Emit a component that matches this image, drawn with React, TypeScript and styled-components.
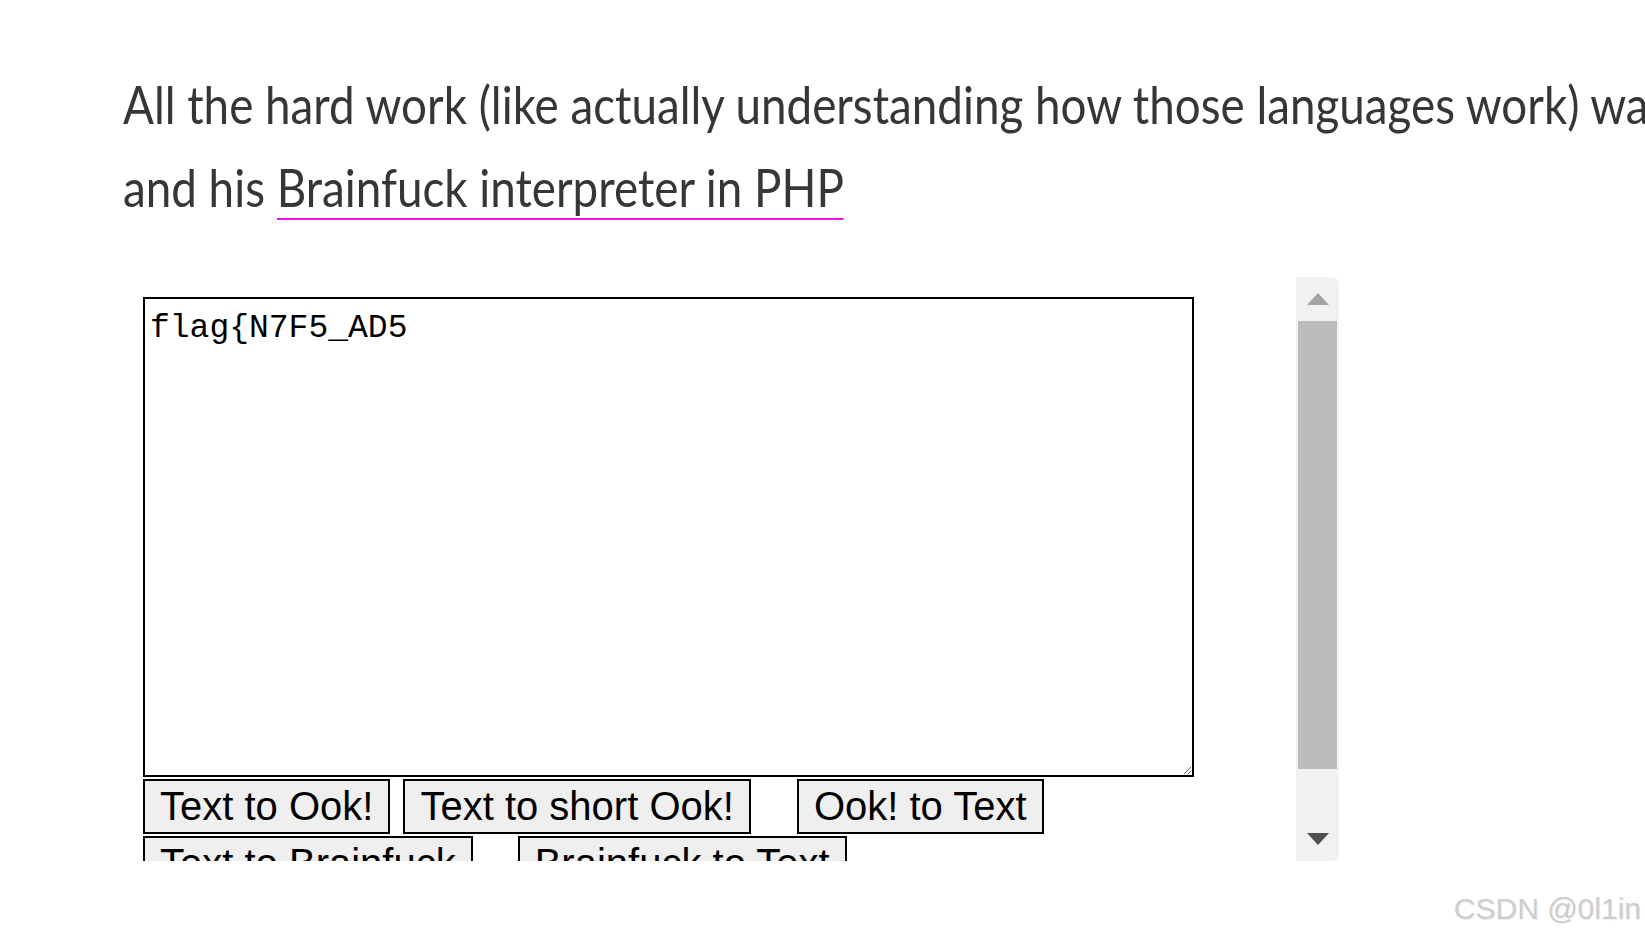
import styled, { createGlobalStyle } from "styled-components";

const GlobalStyle = createGlobalStyle`
  html, body {
    margin: 0;
    padding: 0;
    background: #ffffff;
    overflow: hidden;
  }
  * {
    box-sizing: border-box;
  }
`;

const S = {
  Page: styled.div`
    width: 1645px;
    height: 938px;
    display: flex;
    flex-direction: column;
    overflow: hidden;
  `,
  Main: styled.div`
    padding-left: 123px;
    display: flex;
    flex-direction: column;
  `,
  Paragraph: styled.p`
    margin: 63px 0 0;
    font-family: Lato, "Liberation Sans", sans-serif;
    font-size: 52px;
    line-height: 83px;
    color: #363636;
    white-space: nowrap;
    /* the original face is a narrow one, Lato is squeezed to its width */
    transform: scaleX(0.88);
    transform-origin: left center;
  `,
  Link: styled.a`
    color: inherit;
    text-decoration: none;
    border-bottom: 2px solid #f012e8;
  `,
  Frame: styled.div`
    margin-top: 48px;
    height: 584px;
    width: 1216px;
    display: flex;
  `,
  Content: styled.div`
    flex: 1;
    overflow: hidden;
    padding: 20px 0 0 20px;
  `,
  TextArea: styled.textarea`
    display: block;
    width: 1051px;
    height: 480px;
    margin: 0 0 2px;
    padding: 11px 5px 5px;
    border: 2px solid #000;
    outline: none;
    font-family: "Liberation Mono", "DejaVu Sans Mono", monospace;
    font-size: 33px;
    color: #000;
    background: #fff;
  `,
  ButtonRow: styled.div`
    display: flex;
    margin-bottom: 2px;
  `,
  Button: styled.button<{ $gap?: number }>`
    height: 55px;
    margin-left: ${({ $gap }) => $gap ?? 0}px;
    padding: 0 15px;
    border: 2px solid #000;
    background: #efefef;
    font-family: "Liberation Sans", Arial, sans-serif;
    font-size: 40px;
    color: #000;
    white-space: nowrap;
    cursor: pointer;
  `,
  ScrollBar: styled.div`
    width: 43px;
    display: flex;
    flex-direction: column;
    background: #f1f1f1;
    border-radius: 0 8px 8px 0;
  `,
  ArrowBox: styled.div`
    height: 44px;
    display: flex;
    align-items: center;
    justify-content: center;
  `,
  Thumb: styled.div`
    height: 448px;
    margin: 0 2px;
    background: #bcbcbc;
  `,
  Track: styled.div`
    flex: 1;
  `,
  Footer: styled.div`
    display: flex;
    justify-content: flex-end;
    padding: 31px 4px 0 0;
    font-family: "Liberation Sans", Arial, sans-serif;
    font-size: 30px;
    line-height: 33px;
    color: #cdcdcd;
    text-shadow: 1px 1px 1px rgba(0, 0, 0, 0.08);
  `,
};

const Arrow = ({ up, color }: { up?: boolean; color: string }) => (
  <svg width="22" height="12" viewBox="0 0 22 12">
    <polygon points={up ? "11,0 22,12 0,12" : "0,0 22,0 11,12"} fill={color} />
  </svg>
);

const App = () => {
  return (
    <>
      <GlobalStyle />
      <S.Page>
        <S.Main>
          <S.Paragraph>
            All the hard work (like actually understanding how those languages
            work) was done by Daniel Lorch
            <br />
            and his <S.Link href="#">Brainfuck interpreter in PHP</S.Link>
          </S.Paragraph>
          <S.Frame>
            <S.Content>
              <S.TextArea defaultValue="flag{N7F5_AD5" spellCheck={false} />
              <S.ButtonRow>
                <S.Button>Text to Ook!</S.Button>
                <S.Button $gap={13}>Text to short Ook!</S.Button>
                <S.Button $gap={46}>Ook! to Text</S.Button>
              </S.ButtonRow>
              <S.ButtonRow>
                <S.Button>Text to Brainfuck</S.Button>
                <S.Button $gap={45}>Brainfuck to Text</S.Button>
              </S.ButtonRow>
            </S.Content>
            <S.ScrollBar>
              <S.ArrowBox>
                <Arrow up color="#a3a3a3" />
              </S.ArrowBox>
              <S.Thumb />
              <S.Track />
              <S.ArrowBox>
                <Arrow color="#505050" />
              </S.ArrowBox>
            </S.ScrollBar>
          </S.Frame>
        </S.Main>
        <S.Footer>CSDN @0l1in</S.Footer>
      </S.Page>
    </>
  );
};

export default App;
